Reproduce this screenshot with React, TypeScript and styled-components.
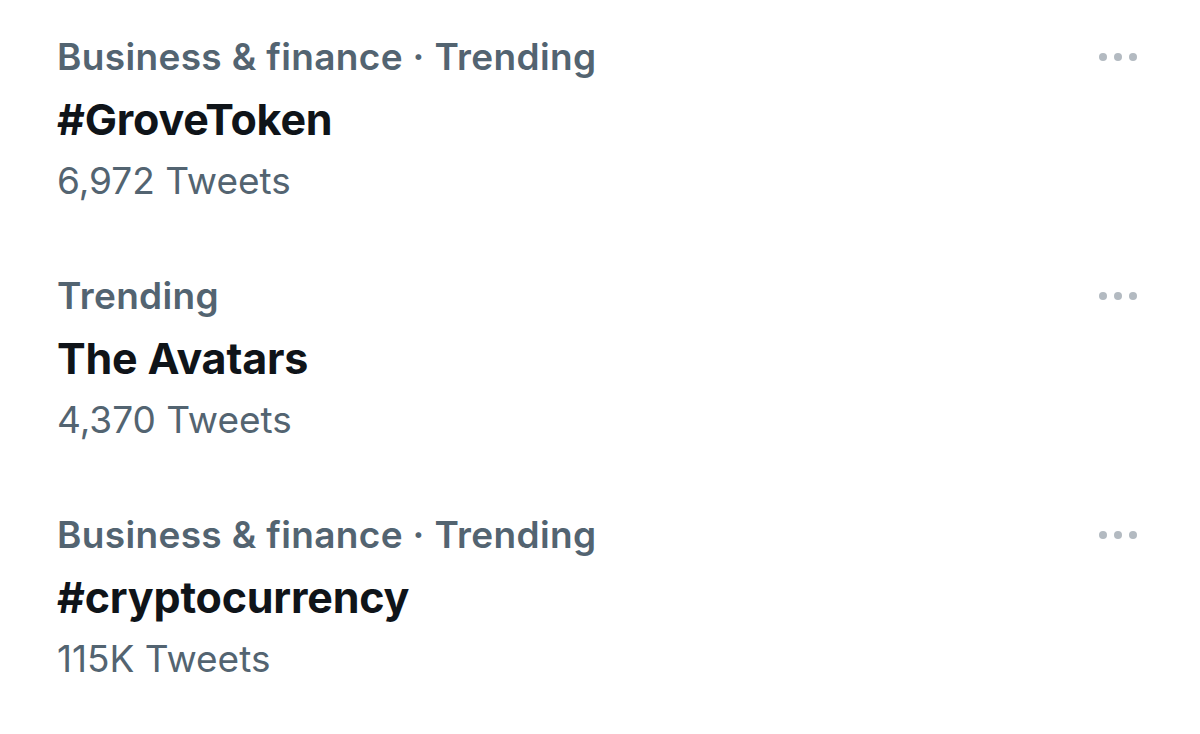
import * as React from "react";
import styled, { createGlobalStyle } from "styled-components";

const GlobalStyle = createGlobalStyle`
    html, body {
        margin: 0;
        padding: 0;
        background: #ffffff;
    }

    body {
        font-family: Inter, "Noto Sans", "Liberation Sans", sans-serif;
        -webkit-font-smoothing: antialiased;
    }
`

const CTrendList = styled.div`
    width: 1200px;
    height: 734px;
    background: #ffffff;
    overflow: hidden;
`

const CTrendRow = styled.div`
    padding: 26px 63px 27px 57px;
`

const CTrendHeader = styled.div`
    display: flex;
    align-items: center;
    justify-content: space-between;
    height: 62px;
`

const CCategory = styled.span`
    font-size: 37px;
    line-height: 62px;
    font-weight: 600;
    letter-spacing: 0.35px;
    color: #536471;
    white-space: nowrap;
`

const CTitle = styled.div`
    font-size: 43px;
    line-height: 62px;
    font-weight: 700;
    letter-spacing: -0.2px;
    color: #0f1419;
    white-space: nowrap;
`

const CCount = styled.div`
    font-size: 37px;
    line-height: 62px;
    font-weight: 400;
    color: #536471;
    white-space: nowrap;
`

const CMoreButton = styled.button`
    display: flex;
    align-items: center;
    gap: 7px;
    padding: 0;
    margin: 0;
    border: none;
    background: transparent;
    cursor: pointer;
`

const CDot = styled.span`
    width: 8px;
    height: 8px;
    border-radius: 50%;
    background: #b3bac1;
`

interface ITrend {
    category: string;
    title: string;
    count: string;
}

const trends: ITrend[] = [
    { category: "Business & finance · Trending", title: "#GroveToken", count: "6,972 Tweets" },
    { category: "Trending", title: "The Avatars", count: "4,370 Tweets" },
    { category: "Business & finance · Trending", title: "#cryptocurrency", count: "115K Tweets" },
]

function TrendItem({ trend }: { trend: ITrend }) {
    return <CTrendRow>
        <CTrendHeader>
            <CCategory>{trend.category}</CCategory>
            <CMoreButton aria-label="More">
                <CDot />
                <CDot />
                <CDot />
            </CMoreButton>
        </CTrendHeader>
        <CTitle>{trend.title}</CTitle>
        <CCount>{trend.count}</CCount>
    </CTrendRow>
}

function App() {
    return <>
        <GlobalStyle />
        <CTrendList>
            {trends.map((trend, i) => <TrendItem key={i} trend={trend} />)}
        </CTrendList>
    </>
}

export default App;
